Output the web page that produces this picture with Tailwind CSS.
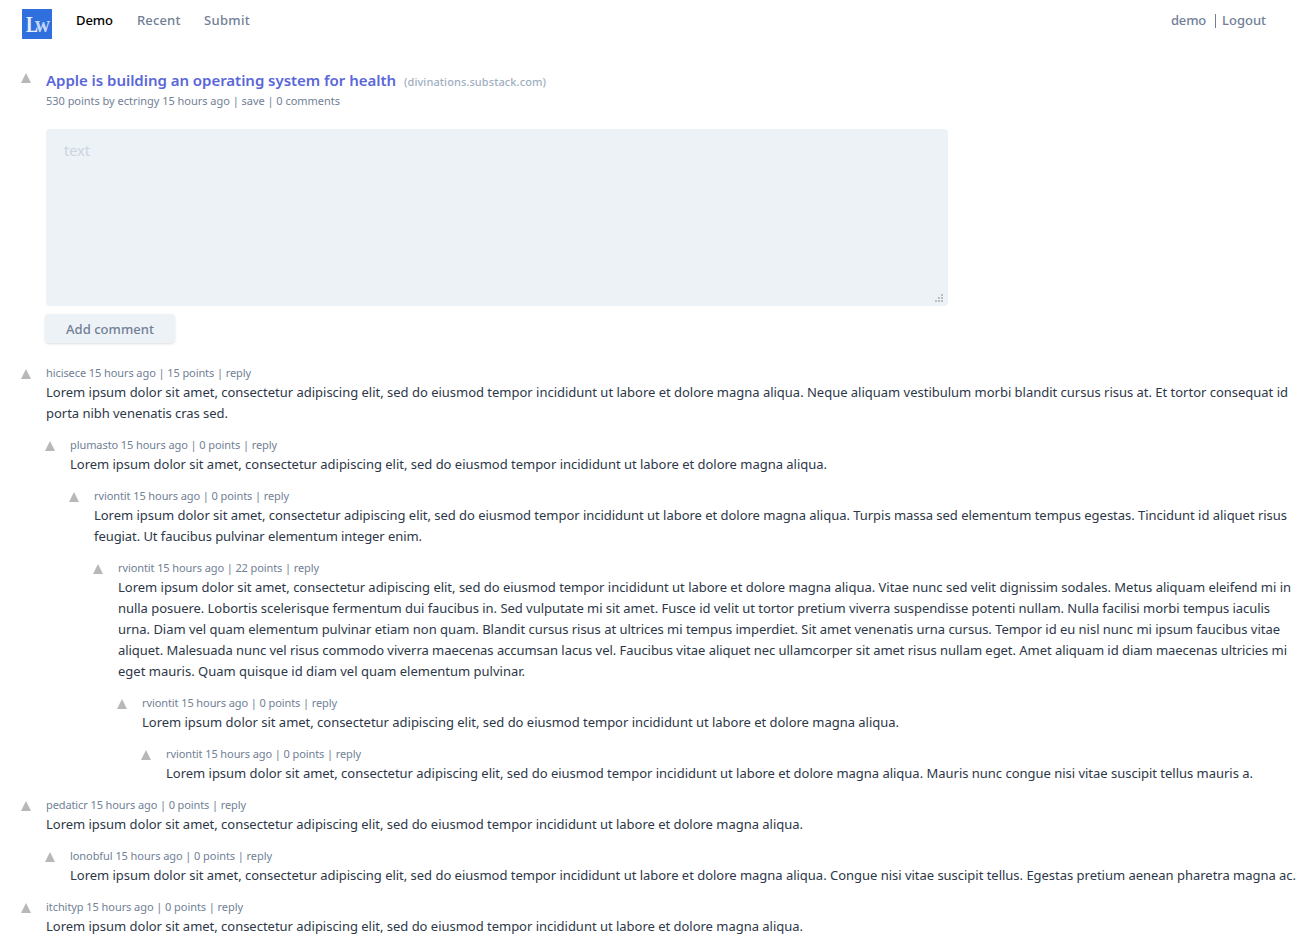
<!DOCTYPE html>
<html lang="en">
  <head>
    <meta charset="UTF-8" />
    <meta name="viewport" content="width=device-width, initial-scale=1.0" />
    <title>Apple is building an operating system for health</title>
    <script src="https://cdn.jsdelivr.net/npm/@tailwindcss/browser@4"></script>
  </head>
  <body class="bg-white font-['Segoe_UI','Noto_Sans','Open_Sans',sans-serif] text-[#2d3748] overflow-hidden">
    <nav class="flex items-start h-12 pl-[22px] pr-[42px] text-[13px] leading-[21px] font-medium text-[#718096]">
      <svg class="w-[30px] h-[30px] mt-[9px] mr-6" viewBox="0 0 30 30">
        <rect width="30" height="30" fill="#2f6fde" />
        <text x="4" y="23" font-family="Liberation Serif, serif" font-weight="bold" font-size="24" fill="#e6effc" textLength="12" lengthAdjust="spacingAndGlyphs">L</text>
        <text x="13" y="23" font-family="Liberation Serif, serif" font-weight="bold" font-size="23" fill="#c3d8f8" textLength="15" lengthAdjust="spacingAndGlyphs">w</text>
      </svg>
      <div class="flex gap-6 mt-2.5">
        <a href="#" class="w-[37px] whitespace-nowrap text-black"><span class="fit" data-w="37">Demo</span></a>
        <a href="#" class="w-[43px] whitespace-nowrap"><span class="fit" data-w="43.5">Recent</span></a>
        <a href="#" class="whitespace-nowrap"><span class="fit" data-w="46">Submit</span></a>
      </div>
      <div class="flex ml-auto mt-2.5 whitespace-nowrap">
        <a href="#" class="mr-[9px]"><span class="fit" data-w="35">demo</span></a>
        <span class="w-px h-3.5 mt-1 mr-1.5 bg-[#718096]"></span>
        <a href="#"><span class="fit" data-w="44">Logout</span></a>
      </div>
    </nav>

    <main class="pl-[21px]">
      <!-- Story -->
      <section class="flex mt-[22px]">
        <svg class="w-2.5 h-2.5 mt-[3px] mr-[15px] shrink-0" viewBox="0 0 10 10"><path d="M5 0L10 10H0z" fill="#b8b8b8" /></svg>
        <div>
          <h1 class="flex items-baseline h-[22px] leading-[20px] whitespace-nowrap">
            <a href="#" class="text-[15px] font-semibold text-[#5a67d8]"><span class="fit" data-w="350">Apple is building an operating system for health</span></a>
            <span class="ml-2 text-[11px] font-medium text-[#a0aec0]"><span class="fit" data-w="142">(divinations.substack.com)</span></span>
          </h1>
          <p class="text-[11px] leading-[18px] text-[#718096] whitespace-nowrap"><span class="fit" data-w="294">530 points by ectringy 15 hours ago | save | 0 comments</span></p>
          <form class="mt-[19px]" onsubmit="return false">
            <div class="relative w-[902px] h-[177px]">
              <textarea placeholder="text" class="block w-full h-full resize-none rounded bg-[#edf2f7] px-[18px] py-[9px] text-[14.5px] leading-[25px] placeholder:text-[#cbd5e0] focus:outline-none"></textarea>
              <svg class="absolute right-[5px] bottom-1 w-2 h-2" viewBox="0 0 8 8" fill="#bdbdbd" shape-rendering="crispEdges">
                <path d="M6 0h2v2H6zM3 3h2v2H3zM6 3h2v2H6zM0 6h2v2H0zM3 6h2v2H3zM6 6h2v2H6z" />
              </svg>
            </div>
            <button class="block w-[130px] h-[29px] mt-2 mb-px -ml-px rounded bg-[#edf2f7] text-[13px] leading-[30px] font-medium text-[#718096] shadow whitespace-nowrap"><span class="fit" data-w="88">Add comment</span></button>
          </form>
        </div>
      </section>

      <!-- Comments -->
      <section id="comments" class="mt-5 flex flex-col gap-3"></section>
    </main>

    <script>
      const lorem =
        'Lorem ipsum dolor sit amet, consectetur adipiscing elit, sed do eiusmod tempor incididunt ut labore et dolore magna aliqua.';

      // Each line is [text, width]
      const comments = [
        { depth: 0, user: 'hicisece', points: 15, w: 205, lines: [
          [lorem + ' Neque aliquam vestibulum morbi blandit cursus risus at. Et tortor consequat id', 1242],
          ['porta nibh venenatis cras sed.', 182],
        ] },
        { depth: 1, user: 'plumasto', points: 0, w: 207, lines: [[lorem, 757]] },
        { depth: 2, user: 'rviontit', points: 0, w: 195, lines: [
          [lorem + ' Turpis massa sed elementum tempus egestas. Tincidunt id aliquet risus', 1193],
          ['feugiat. Ut faucibus pulvinar elementum integer enim.', 328],
        ] },
        { depth: 3, user: 'rviontit', points: 22, w: 201, lines: [
          [lorem + ' Vitae nunc sed velit dignissim sodales. Metus aliquam eleifend mi in', 1173],
          ['nulla posuere. Lobortis scelerisque fermentum dui faucibus in. Sed vulputate mi sit amet. Fusce id velit ut tortor pretium viverra suspendisse potenti nullam. Nulla facilisi morbi tempus iaculis', 1152],
          ['urna. Diam vel quam elementum pulvinar etiam non quam. Blandit cursus risus at ultrices mi tempus imperdiet. Sit amet venenatis urna cursus. Tempor id eu nisl nunc mi ipsum faucibus vitae', 1162],
          ['aliquet. Malesuada nunc vel risus commodo viverra maecenas accumsan lacus vel. Faucibus vitae aliquet nec ullamcorper sit amet risus nullam eget. Amet aliquam id diam maecenas ultricies mi', 1169],
          ['eget mauris. Quam quisque id diam vel quam elementum pulvinar.', 407],
        ] },
        { depth: 4, user: 'rviontit', points: 0, w: 195, lines: [[lorem, 757]] },
        { depth: 5, user: 'rviontit', points: 0, w: 195, lines: [[lorem + ' Mauris nunc congue nisi vitae suscipit tellus mauris a.', 1087]] },
        { depth: 0, user: 'pedaticr', points: 0, w: 200, lines: [[lorem, 757]] },
        { depth: 1, user: 'lonobful', points: 0, w: 202, lines: [[lorem + ' Congue nisi vitae suscipit tellus. Egestas pretium aenean pharetra magna ac.', 1226]] },
        { depth: 0, user: 'itchityp', points: 0, w: 197, lines: [[lorem, 757]] },
      ];

      document.getElementById('comments').innerHTML = comments
        .map(
          (c) => `
          <article class="flex" style="padding-left: ${c.depth * 24}px">
            <svg class="w-2.5 h-2.5 mt-[5px] mr-[15px] shrink-0" viewBox="0 0 10 10"><path d="M5 0L10 10H0z" fill="#b8b8b8" /></svg>
            <div class="whitespace-nowrap">
              <p class="text-[11px] leading-[18px] text-[#718096]"><span class="fit" data-w="${c.w}">${c.user} 15 hours ago | ${c.points} points | reply</span></p>
              <div class="text-[13px] leading-[21px]">
                ${c.lines.map(([text, w]) => `<p><span class="fit" data-w="${w}">${text}</span></p>`).join('')}
              </div>
            </div>
          </article>`
        )
        .join('');

      // Spread the letters so that each text takes its set width
      const fitText = () => {
        const items = [...document.querySelectorAll('.fit')];
        items.forEach((el) => {
          el.style.letterSpacing = '0.01px';
        });
        const widths = items.map((el) => el.getBoundingClientRect().width);
        items.forEach((el, i) => {
          const gap = 0.01 + (el.dataset.w - widths[i]) / el.textContent.length;
          el.style.letterSpacing = `${gap}px`;
        });
      };

      fitText();
      window.addEventListener('load', () => {
        fitText();
        requestAnimationFrame(fitText);
      });
      document.fonts.ready.then(fitText);
    </script>
  </body>
</html>
